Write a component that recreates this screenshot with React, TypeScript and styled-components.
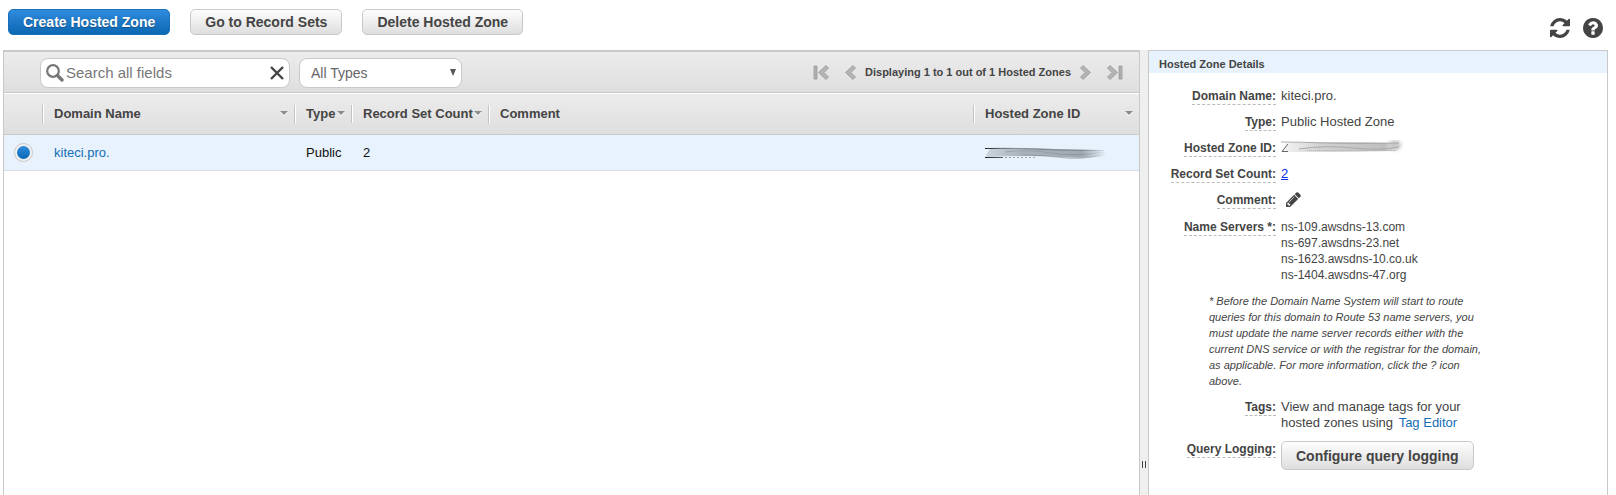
import React from "react";
import styled, { createGlobalStyle, css } from "styled-components";

const GlobalStyle = createGlobalStyle`
  *, *::before, *::after { box-sizing: border-box; }
  body {
    margin: 0;
    background: #fff;
    color: #444;
    font-family: "Liberation Sans", Arial, sans-serif;
    font-size: 13px;
    line-height: 16px;
  }
`;

const line = "#c9c9c9";
const panelGradient = "linear-gradient(#ececec, #dedede)";
const selected = "#e7f2fd";

const Page = styled.div`
  display: flex;
  flex-direction: column;
  min-height: 100vh;
`;

const TopBar = styled.header`
  display: flex;
  justify-content: space-between;
  align-items: flex-start;
  height: 50px;
  padding: 9px 13px 0 8px;
`;

const Actions = styled.div`
  display: flex;
  gap: 20px;
`;

const Button = styled.button<{ $primary?: boolean; $tall?: boolean }>`
  height: ${(p) => (p.$tall ? 29 : 26)}px;
  padding: 0 14px;
  border: 1px solid ${line};
  border-radius: 5px;
  background: linear-gradient(#fdfdfd, #dedede);
  color: #444;
  font: bold 14px/24px "Liberation Sans", Arial, sans-serif;
  white-space: nowrap;
  cursor: pointer;
  ${(p) =>
    p.$primary &&
    css`
      border-color: #1a70b8;
      background: linear-gradient(#2f8bdc, #0b68b3);
      color: #fff;
      text-shadow: 0 1px 1px #1a4f80;
    `}
`;

const Tools = styled.div`
  display: flex;
  gap: 13px;
  padding-top: 9px;
`;

const IconButton = styled.button`
  display: flex;
  padding: 0;
  border: 0;
  background: none;
  color: #444;
  cursor: pointer;
`;

const Workspace = styled.div`
  flex: 1;
  display: flex;
  align-items: stretch;
  padding: 0 8px 0 3px;
`;

const ListPanel = styled.main`
  flex: 1;
  min-width: 0;
  border: 1px solid ${line};
  border-top-width: 2px;
  border-bottom: 0;
`;

const Toolbar = styled.div`
  display: flex;
  align-items: center;
  gap: 9px;
  height: 41px;
  padding: 0 16px 0 36px;
  border-bottom: 1px solid ${line};
  background: ${panelGradient};
`;

const SearchBox = styled.div`
  display: flex;
  align-items: center;
  gap: 2px;
  width: 250px;
  height: 30px;
  margin-top: 1px;
  padding: 0 5px;
  border: 1px solid ${line};
  border-radius: 8px;
  background: #fff;
`;

const SearchInput = styled.input`
  flex: 1;
  min-width: 0;
  padding: 0;
  border: 0;
  outline: 0;
  background: none;
  color: #444;
  font: 15px "Liberation Sans", Arial, sans-serif;
  &::placeholder { color: #777; opacity: 1; }
`;

const SelectBox = styled.div`
  display: grid;
  align-items: center;
  width: 163px;
  height: 30px;
  margin-top: 1px;
  border: 1px solid ${line};
  border-radius: 8px;
  background: #fff;
  & > * { grid-area: 1 / 1; }
  & > svg { justify-self: end; margin-right: 5px; pointer-events: none; }
`;

const Select = styled.select`
  appearance: none;
  width: 100%;
  height: 28px;
  padding: 0 24px 0 11px;
  border: 0;
  border-radius: 8px;
  background: transparent;
  color: #666;
  font: 14px "Liberation Sans", Arial, sans-serif;
`;

const Pager = styled.nav`
  display: flex;
  align-items: center;
  margin-left: auto;
  font-size: 11px;
  font-weight: bold;
  white-space: nowrap;
`;

const PagerText = styled.span`
  margin: 0 9px;
`;

const PagerGap = styled.span`
  width: 16px;
`;

const Table = styled.table`
  width: 100%;
  table-layout: fixed;
  border-collapse: separate;
  border-spacing: 0;
`;

const HeadRow = styled.tr`
  background: ${panelGradient};
  box-shadow: inset 0 1px #fff;
`;

const HeadCell = styled.th<{ $width?: number }>`
  width: ${(p) => (p.$width ? `${p.$width}px` : "auto")};
  height: 42px;
  padding: 0;
  border-bottom: 1px solid ${line};
  text-align: left;
`;

const HeadLabel = styled.div`
  display: flex;
  align-items: center;
  justify-content: space-between;
  height: 18px;
  padding: 0 6px 0 11px;
  border-left: 1px solid #c4c4c4;
  box-shadow: inset 1px 0 #fff;
  white-space: nowrap;
`;

const Row = styled.tr`
  background: ${selected};
`;

const Cell = styled.td`
  height: 36px;
  padding: 0 0 0 12px;
  border-bottom: 1px solid #d9dde1;
  color: #111;
  &:first-child { padding-left: 10px; }
`;

const Radio = styled.input`
  appearance: none;
  display: grid;
  place-items: center;
  width: 19px;
  height: 19px;
  margin: 0;
  border: 1px solid ${line};
  border-radius: 50%;
  background: #f1f1f1;
  &:checked::before {
    content: "";
    width: 13px;
    height: 13px;
    border-radius: 50%;
    background: linear-gradient(#2f8bdc, #0b68b3);
  }
`;

const Link = styled.a<{ $underlined?: boolean }>`
  color: ${(p) => (p.$underlined ? "#0a2eea" : "#146eb4")};
  text-decoration: ${(p) => (p.$underlined ? "underline" : "none")};
`;

const Splitter = styled.div`
  width: 8px;
  padding: 411px 0 0 2px;
  background: #eef0f0;
`;

const Grip = styled.div`
  width: 4px;
  height: 7px;
  border: solid #444;
  border-width: 0 1px;
`;

const Details = styled.aside`
  width: 460px;
  border: 1px solid ${line};
  border-bottom: 0;
`;

const DetailsTitle = styled.h2`
  height: 22px;
  margin: 0 0 15px;
  padding: 0 10px;
  background: ${selected};
  font-size: 11px;
  line-height: 26px;
`;

const Fields = styled.dl`
  display: grid;
  grid-template-columns: 127px 205px;
  column-gap: 5px;
  row-gap: 10px;
  margin: 0;
`;

const Term = styled.dt`
  text-align: right;
  font-size: 12px;
  font-weight: bold;
  white-space: nowrap;
`;

const TermText = styled.span`
  padding-bottom: 1px;
  border-bottom: 1px dashed #bbb;
`;

const Value = styled.dd<{ $small?: boolean }>`
  margin: 0;
  font-size: ${(p) => (p.$small ? 12 : 13)}px;
`;

const Note = styled.p`
  grid-column: 1 / -1;
  width: 276px;
  margin: 0 0 0 60px;
  font-size: 11px;
  font-style: italic;
`;

const Icon = ({ d, size, box = "0 0 1536 1536" }: { d: string; size: number; box?: string }) => (
  <svg width={size} height={size} viewBox={box} fill="currentColor" aria-hidden="true">
    <path d={d} />
  </svg>
);

const refreshPath =
  "M1511 928q0 5-1 7-64 268-268 434.5t-478 166.5q-146 0-282.5-55t-243.5-157l-129 129q-19 19-45 19t-45-19-19-45v-448q0-26 19-45t45-19h448q26 0 45 19t19 45-19 45l-137 137q71 66 161 102t187 36q134 0 250-65t186-179q11-17 53-117 8-23 30-23h192q13 0 22.5 9.5t9.5 22.5zm25-800v448q0 26-19 45t-45 19h-448q-26 0-45-19t-19-45 19-45l138-138q-148-137-349-137-134 0-250 65t-186 179q-11 17-53 117-8 23-30 23h-199q-13 0-22.5-9.5t-9.5-22.5v-7q65-268 270-434.5t480-166.5q146 0 284 55.5t245 156.5l130-129q19-19 45-19t45 19 19 45z";
const helpPath =
  "M1024 1376v-192q0-14-9-23t-23-9h-192q-14 0-23 9t-9 23v192q0 14 9 23t23 9h192q14 0 23-9t9-23zm256-672q0-88-55.5-163t-138.5-116-170-41q-243 0-371 213-15 24 8 42l132 100q7 6 19 6 16 0 25-12 53-68 86-92 34-24 86-24 48 0 85.5 26t37.5 59q0 38-20 61t-68 45q-63 28-115.5 86.5t-52.5 125.5v36q0 14 9 23t23 9h192q14 0 23-9t9-23q0-19 21.5-49.5t54.5-49.5q32-18 49-28.5t46-35 44.5-48 28-60.5 12.5-81zm384 192q0 209-103 385.5t-279.5 279.5-385.5 103-385.5-103-279.5-279.5-103-385.5 103-385.5 279.5-279.5 385.5-103 385.5 103 279.5 279.5 103 385.5z";
const pencilPath =
  "M491 1536l91-91-235-235-91 91v107h128v128h107zm523-928q0-22-22-22-10 0-17 7l-542 542q-7 7-7 17 0 22 22 22 10 0 17-7l542-542q7-7 7-17zm-54-192l416 416-832 832h-416v-416zm683 96q0 53-37 90l-166 166-416-416 166-165q36-38 90-38 53 0 91 38l235 234q37 39 37 91z";

const SortArrow = () => (
  <svg width="8" height="5" viewBox="0 0 8 5" aria-hidden="true">
    <path d="M0 1h8L4 5z" fill="#fff" />
    <path d="M0 0h8L4 4z" fill="#8c8c8c" />
  </svg>
);

const Chevron = ({ back, edge }: { back?: boolean; edge?: boolean }) => (
  <svg width={edge ? 16 : 11} height="15" viewBox={edge ? "0 0 16 15" : "0 0 11 15"} aria-hidden="true">
    <g transform={back ? `translate(${edge ? 16 : 11} 0) scale(-1 1)` : undefined}>
      <path d="M0.5 3L3 0.5L10.5 7.5L3 14.5L0.5 12L5 7.5z" fill="#b4b4b4" stroke="#999" strokeWidth="0.8" />
      {edge && <path d="M12 1h3v13h-3z" fill="#b0b0b0" stroke="#999" strokeWidth="0.8" />}
    </g>
  </svg>
);

const Smudge = styled.svg`
  display: block;
`;

const ListSmudge = () => (
  <Smudge width="124" height="12" viewBox="0 0 124 12" role="img" aria-label="Hidden zone ID">
    <defs>
      <linearGradient id="listFade">
        <stop offset="0" stopColor="#cbd5dd" />
        <stop offset="0.3" stopColor="#a9b2ba" />
        <stop offset="0.8" stopColor="#a0a9b1" />
        <stop offset="1" stopColor="#a0a9b1" stopOpacity="0" />
      </linearGradient>
      <linearGradient id="listStroke" gradientUnits="userSpaceOnUse" x1="0" y1="0" x2="122" y2="0">
        <stop offset="0" stopColor="#222" />
        <stop offset="0.25" stopColor="#858d94" />
        <stop offset="0.8" stopColor="#6c747a" />
        <stop offset="1" stopColor="#8a939b" stopOpacity="0" />
      </linearGradient>
      <filter id="listSoft" x="-5%" y="-30%" width="110%" height="160%">
        <feGaussianBlur stdDeviation="0.5" />
      </filter>
    </defs>
    <g filter="url(#listSoft)">
      <path d="M5 2Q40 0 70 2T120 3L121 9Q100 12 74 10T1 10Q2 5 5 2z" fill="url(#listFade)" />
      <g fill="none" stroke="url(#listStroke)">
        <path d="M4 1.5Q30 1 48 2T78 3T119 3.5" />
        <path d="M20 5Q45 2 66 6T120 5" opacity="0.4" />
        <path d="M38 8Q58 8 76 10.5T118 8" opacity="0.5" />
        <path d="M20 10.5h32" strokeDasharray="2 2" opacity="0.7" />
      </g>
    </g>
    <path d="M0 1.5h8M0 10.5h18" stroke="url(#listStroke)" transform="skewY(0.1)" />
  </Smudge>
);

const DetailSmudge = () => (
  <Smudge width="126" height="16" viewBox="0 0 126 16" role="img" aria-label="Hidden zone ID">
    <defs>
      <linearGradient id="detailFade">
        <stop offset="0" stopColor="#f4f4f4" />
        <stop offset="0.3" stopColor="#d2d2d2" />
        <stop offset="0.85" stopColor="#bebebe" />
        <stop offset="1" stopColor="#ccc" stopOpacity="0" />
      </linearGradient>
      <filter id="detailSoft" x="-50%" y="-50%" width="200%" height="200%">
        <feGaussianBlur stdDeviation="2" />
      </filter>
      <filter id="detailEdge" x="-5%" y="-30%" width="110%" height="160%">
        <feGaussianBlur stdDeviation="0.6" />
      </filter>
    </defs>
    <ellipse cx="114" cy="5" rx="6" ry="5" fill="#c4c4c4" filter="url(#detailSoft)" />
    <g filter="url(#detailEdge)">
      <path d="M4 3Q60 1 116 3L122 5L116 11Q60 12 2 12z" fill="url(#detailFade)" />
      <path d="M0 2Q20 2 45 3T118 3" fill="none" stroke="#aaa" />
      <path d="M18 9Q45 5 72 8T118 7" fill="none" stroke="#aaa" />
    </g>
    <path d="M26 10.5h90" stroke="#b4b4b4" strokeDasharray="1 1" />
    <path d="M7 4L1 11.5h6" fill="none" stroke="#666" />
  </Smudge>
);

const columns = [
  { label: "Domain Name", width: 252, sortable: true },
  { label: "Type", width: 57, sortable: true },
  { label: "Record Set Count", width: 137, sortable: true },
  { label: "Comment", sortable: false },
  { label: "Hosted Zone ID", width: 166, sortable: true },
];

const nameServers = [
  "ns-109.awsdns-13.com",
  "ns-697.awsdns-23.net",
  "ns-1623.awsdns-10.co.uk",
  "ns-1404.awsdns-47.org",
];

const Field = ({ label, small, children }: { label: string; small?: boolean; children: React.ReactNode }) => (
  <>
    <Term><TermText>{label}</TermText></Term>
    <Value $small={small}>{children}</Value>
  </>
);

const ServerList = styled.div`
  white-space: pre-line;
`;

const EditButton = styled(IconButton)`
  margin-left: 5px;
  padding-bottom: 2px;
`;

const TagLink = styled(Link)`
  margin-left: 2px;
`;

export default function App() {
  return (
    <Page>
      <GlobalStyle />
      <TopBar>
        <Actions>
          <Button $primary>Create Hosted Zone</Button>
          <Button>Go to Record Sets</Button>
          <Button>Delete Hosted Zone</Button>
        </Actions>
        <Tools>
          <IconButton aria-label="Refresh"><Icon d={refreshPath} size={20} /></IconButton>
          <IconButton aria-label="Help"><Icon d={helpPath} size={20} box="128 128 1536 1536" /></IconButton>
        </Tools>
      </TopBar>
      <Workspace>
        <ListPanel>
          <Toolbar>
            <SearchBox>
              <svg width="18" height="18" viewBox="0 0 18 18" fill="none" stroke="#777" aria-hidden="true">
                <circle cx="7" cy="7" r="5.8" strokeWidth="2.2" />
                <path d="M11.5 11.5L16 16" strokeWidth="3.4" strokeLinecap="round" />
              </svg>
              <SearchInput type="text" placeholder="Search all fields" aria-label="Search all fields" />
              <IconButton aria-label="Clear search">
                <svg width="14" height="14" viewBox="0 0 14 14" stroke="#444" strokeWidth="2.4" aria-hidden="true">
                  <path d="M1 1L13 13M13 1L1 13" />
                </svg>
              </IconButton>
            </SearchBox>
            <SelectBox>
              <Select aria-label="Zone type" defaultValue="All Types">
                <option>All Types</option>
              </Select>
              <svg width="6" height="7" viewBox="0 0 6 7" aria-hidden="true"><path d="M0 0h6L3 7z" fill="#555" /></svg>
            </SelectBox>
            <Pager aria-label="Pagination">
              <IconButton aria-label="First page"><Chevron back edge /></IconButton>
              <PagerGap />
              <IconButton aria-label="Previous page"><Chevron back /></IconButton>
              <PagerText>Displaying 1 to 1 out of 1 Hosted Zones</PagerText>
              <IconButton aria-label="Next page"><Chevron /></IconButton>
              <PagerGap />
              <IconButton aria-label="Last page"><Chevron edge /></IconButton>
            </Pager>
          </Toolbar>
          <Table>
            <thead>
              <HeadRow>
                <HeadCell $width={38} aria-label="Selection" />
                {columns.map((c) => (
                  <HeadCell key={c.label} $width={c.width}>
                    <HeadLabel>
                      {c.label}
                      {c.sortable && <SortArrow />}
                    </HeadLabel>
                  </HeadCell>
                ))}
              </HeadRow>
            </thead>
            <tbody>
              <Row>
                <Cell><Radio type="radio" name="zone" defaultChecked aria-label="kiteci.pro." /></Cell>
                <Cell><Link href="#zone">kiteci.pro.</Link></Cell>
                <Cell>Public</Cell>
                <Cell>2</Cell>
                <Cell />
                <Cell><ListSmudge /></Cell>
              </Row>
            </tbody>
          </Table>
        </ListPanel>
        <Splitter><Grip /></Splitter>
        <Details>
          <DetailsTitle>Hosted Zone Details</DetailsTitle>
          <Fields>
            <Field label="Domain Name:">kiteci.pro.</Field>
            <Field label="Type:">Public Hosted Zone</Field>
            <Field label="Hosted Zone ID:"><DetailSmudge /></Field>
            <Field label="Record Set Count:"><Link href="#records" $underlined>2</Link></Field>
            <Field label="Comment:">
              <EditButton aria-label="Edit comment"><Icon d={pencilPath} size={15} box="128 128 1536 1536" /></EditButton>
            </Field>
            <Field label="Name Servers *:" small>
              <ServerList>{nameServers.join("\n")}</ServerList>
            </Field>
            <Note>
              * Before the Domain Name System will start to route queries for this domain to Route 53 name servers, you
              must update the name server records either with the current DNS service or with the registrar for the
              domain, as applicable. For more information, click the ? icon above.
            </Note>
            <Field label="Tags:">
              View and manage tags for your hosted zones using <TagLink href="#tags">Tag Editor</TagLink>
            </Field>
            <Field label="Query Logging:"><Button $tall>Configure query logging</Button></Field>
          </Fields>
        </Details>
      </Workspace>
    </Page>
  );
}
